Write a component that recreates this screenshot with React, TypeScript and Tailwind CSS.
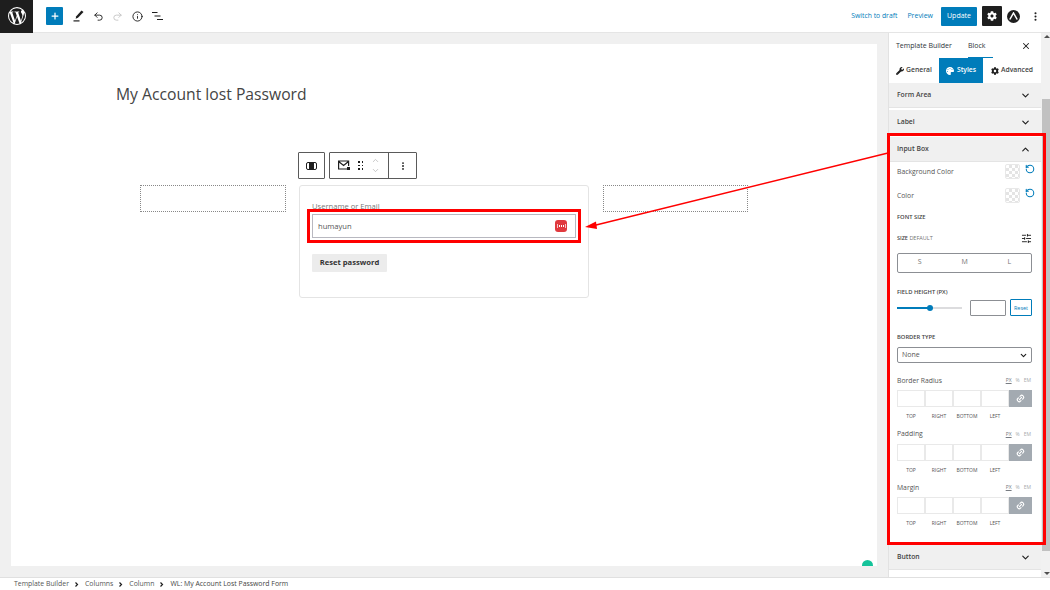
import { ChevronDown, ChevronUp, Info, Link2, MoreVertical, Plus, Redo2, RotateCw, SlidersHorizontal, Undo2, X } from "lucide-react";
import { FaCog, FaPalette, FaWrench } from "react-icons/fa";

const Checker = () => (
  <div className="w-[15px] h-[15px] rounded-[2px] border border-[#e8e8e8] bg-[repeating-conic-gradient(#e4e4e4_0_25%,#ffffff_0_50%)] bg-[length:6px_6px]" />
);

const PanelHead = ({ label, open }: { label: string; open?: boolean }) => (
  <div className="h-[25px] bg-[#f0f0f0] border-b border-[#e4e4e4] flex items-center justify-between pl-[8px] pr-[10px] shrink-0">
    <span className="text-[6.800px] font-semibold text-[#444]">{label}</span>
    {open ? <ChevronUp size={11} strokeWidth={2.5} className="text-[#1e1e1e]" /> : <ChevronDown size={11} strokeWidth={2.5} className="text-[#1e1e1e]" />}
  </div>
);

const ColorRow = ({ label }: { label: string }) => (
  <div className="h-[24px] pt-[2px] flex items-start justify-between -mr-[3px]">
    <span className="text-[6.800px] leading-[15px] text-[#555]">{label}</span>
    <div className="flex items-start gap-[5px]">
      <Checker />
      <RotateCw size={10} strokeWidth={2.5} className="text-[#007cba] -scale-x-100" />
    </div>
  </div>
);

const SpacingRow = ({ label }: { label: string }) => (
  <div className="h-[53.5px]">
    <div className="flex items-center justify-between h-[16px] pr-[1px]">
      <span className="text-[6.800px] text-[#555]">{label}</span>
      <span className="flex gap-[4px] text-[5px] text-[#a7aaad]">
        <span className="underline text-[#787c82]">PX</span>
        <span>%</span>
        <span>EM</span>
      </span>
    </div>
    <div className="flex h-[17px] mt-[1px]">
      {[0, 1, 2, 3].map((i) => (
        <div key={i} className="w-[28px] border border-[#e9e9e9]" />
      ))}
      <div className="w-[23px] bg-[#a3aab1] flex items-center justify-center">
        <Link2 size={9} strokeWidth={3} className="text-white -rotate-45" />
      </div>
    </div>
    <div className="flex mt-[6px] text-[5px] text-[#555]">
      {["TOP", "RIGHT", "BOTTOM", "LEFT"].map((t) => (
        <span key={t} className="w-[28px] text-center">{t}</span>
      ))}
    </div>
  </div>
);

const Crumb = () => (
  <svg width="16" height="7" viewBox="0 0 16 7" fill="none" stroke="#1e1e1e" strokeWidth="1.200">
    <path d="M6.500 1.500 8.500 3.500 6.500 5.500" />
  </svg>
);

export default function App() {
  return (
    <div className="relative w-[1050px] h-[590px] overflow-hidden bg-white flex flex-col font-['Open_Sans',sans-serif]">
      {/* top bar */}
      <header className="h-[33px] shrink-0 border-b border-[#e5e5e5] flex items-center">
        <div className="w-[33px] h-[33px] bg-[#1e1e1e] flex items-center justify-center">
          <svg width="18" height="18" viewBox="0 0 20 20" fill="white">
            <path d="M10 0a10 10 0 1 0 0 20 10 10 0 0 0 0-20zM1.200 10c0-1.300.3-2.500.8-3.600l4.200 11.500A8.800 8.800 0 0 1 1.200 10zm8.800 8.800c-.9 0-1.700-.1-2.500-.4l2.600-7.700 2.700 7.500v.1c-.9.300-1.800.5-2.800.5zm1.200-12.900c.5 0 1-.1 1-.1.500 0 .4-.8-.1-.7 0 0-1.400.1-2.300.1-.8 0-2.200-.1-2.200-.1-.5 0-.6.700-.1.700 0 0 .4.100.9.100l1.300 3.700-1.900 5.600-3.100-9.300c.5 0 1-.1 1-.1.500 0 .4-.8-.1-.7 0 0-1.400.1-2.300.1h-.6A8.800 8.800 0 0 1 16 3.600h-.1c-.9 0-1.500.8-1.500 1.600 0 .7.400 1.300.9 2.100.3.600.7 1.300.7 2.400 0 .7-.3 1.600-.7 2.700l-.9 3-3.200-9.500zm3.200 11.700 2.700-7.800c.5-1.300.7-2.300.7-3.200 0-.3 0-.6-.1-.9a8.800 8.800 0 0 1-3.300 11.900z" />
          </svg>
        </div>
        <div className="ml-[13px] w-[17px] h-[18px] bg-[#007cba] rounded-[1px] flex items-center justify-center">
          <Plus size={10} strokeWidth={3} className="text-white" />
        </div>
        <svg className="ml-[10px]" width="11" height="12" viewBox="0 0 11 12" fill="#1e1e1e">
          <path d="M8.500.500 10.500 2 5 7.800 2.600 8.800 3.300 6.300Z" />
          <rect x="0.500" y="10.300" width="6" height="1.200" />
        </svg>
        <Undo2 size={11} strokeWidth={2} className="ml-[9px] text-[#1e1e1e]" />
        <Redo2 size={11} strokeWidth={2} className="ml-[8px] text-[#c4c4c4]" />
        <Info size={11} strokeWidth={2} className="ml-[9px] text-[#1e1e1e]" />
        <svg className="ml-[9px]" width="11" height="10" viewBox="0 0 11 10" stroke="#1e1e1e" strokeWidth="1.200">
          <path d="M0 1.500H5.500M2.500 5H8.500M5 8.500H11" />
        </svg>
        <div className="ml-auto flex items-center">
          <span className="text-[6.800px] text-[#007cba]">Switch to draft</span>
          <span className="ml-[10px] text-[7px] text-[#007cba]">Preview</span>
          <div className="ml-[8px] w-[36px] h-[19px] bg-[#007cba] rounded-[1px] text-white text-[7px] flex items-center justify-center">Update</div>
          <div className="ml-[5px] w-[20px] h-[20px] bg-[#1e1e1e] rounded-[1px] flex items-center justify-center">
            <FaCog size={10} className="text-white" />
          </div>
          <div className="ml-[5px] w-[13px] h-[13px] bg-[#1e1e1e] rounded-full flex items-center justify-center">
            <svg width="9" height="8" viewBox="0 0 9 8" fill="none" stroke="white" strokeWidth="1.500">
              <path d="M.8 7.500 4.500 1 8.200 7.500" />
            </svg>
          </div>
          <MoreVertical size={11} strokeWidth={2.5} className="ml-[10px] mr-[9px] text-[#1e1e1e]" />
        </div>
      </header>

      <div className="flex flex-1 min-h-0">
        {/* editor */}
        <main className="w-[888px] shrink-0 bg-[#f0f0f0] px-[11px] pt-[11px] pb-[11px]">
          <div className="relative h-full bg-white overflow-hidden">
            <h1 className="pl-[105px] pt-[39px] text-[15.700px] leading-[22px] text-[#444]">My Account lost Password</h1>
            <div className="flex ml-[129px] mt-[47px]">
              <div className="w-[146px] h-[27px] mt-[33px] border border-dotted border-[#888]" />
              <div className="ml-[13px]">
                <div className="flex h-[27px] -ml-[1px]">
                  <div className="w-[27px] border border-[#5a5a5a] rounded-[1px] flex items-center justify-center">
                    <div className="w-[11px] h-[8px] border border-[#1e1e1e] rounded-[2px] flex justify-center"><div className="w-[5px] bg-[#1e1e1e]" /></div>
                  </div>
                  <div className="ml-[4px] border border-[#5a5a5a] rounded-[1px] flex">
                    <div className="w-[59px] flex items-center pl-[7px] border-r border-[#5a5a5a]">
                      <svg width="14" height="11" viewBox="0 0 14 11" fill="none" stroke="#1e1e1e" strokeWidth="1.200">
                        <path d="M10 9H1.600V1h10v5M1.600 1.500 6.600 5.500 11.500 1.500" />
                        <rect x="10" y="7" width="3" height="3" fill="#1e1e1e" stroke="none" />
                      </svg>
                      <div className="ml-[7px] grid grid-cols-2 gap-[2px]">
                        {[0, 1, 2, 3, 4, 5].map((i) => (
                          <div key={i} className="w-[1.500px] h-[1.500px] bg-[#1e1e1e]" />
                        ))}
                      </div>
                      <div className="ml-[8px] flex flex-col gap-[1px]">
                        <ChevronUp size={9} className="text-[#b5b5b5]" />
                        <ChevronDown size={9} className="text-[#b5b5b5]" />
                      </div>
                    </div>
                    <div className="w-[27px] flex items-center justify-center">
                      <MoreVertical size={10} strokeWidth={2.5} className="text-[#1e1e1e]" />
                    </div>
                  </div>
                </div>
                <div className="mt-[6px] w-[290px] h-[113px] border border-[#e4e4e4] rounded-[3px] px-[12px] pt-[15px]">
                  <div className="text-[7.600px] leading-[11px] text-[#777]">Username or Email</div>
                  <div className="h-[24px] mt-[2px] border border-[#b8b8c0] flex items-center justify-between pl-[5px] pr-[8px]">
                    <span className="text-[7.600px] text-[#555] pt-[1px]">humayun</span>
                    <div className="w-[12px] h-[12px] bg-[#e0393e] rounded-[3px] flex items-center justify-center gap-[1px]">
                      <span className="w-[1px] h-[4px] bg-white/70" />
                      {[0, 1, 2].map((i) => (
                        <span key={i} className="w-[1px] h-[1.500px] bg-white" />
                      ))}
                      <span className="w-[1px] h-[4px] bg-white/70" />
                    </div>
                  </div>
                  <div className="mt-[16px] w-[75px] h-[18px] bg-[#ececec] rounded-[1px] flex items-center justify-center text-[7.600px] font-bold text-[#333]">Reset password</div>
                </div>
              </div>
              <div className="ml-[14px] w-[145px] h-[27px] mt-[33px] border border-dotted border-[#888]" />
            </div>
            <div className="absolute right-[4px] -bottom-[5px] w-[11px] h-[11px] rounded-full bg-[#15c39a]" />
          </div>
        </main>

        {/* sidebar */}
        <aside className="flex-1 border-l border-[#e2e2e2] flex min-w-0 h-[544px]">
          <div className="w-[152px] shrink-0 flex flex-col overflow-hidden">
            <div className="h-[25px] shrink-0 flex items-center pl-[7px] pr-[10px] pt-[1px] text-[7px] text-[#2c3338]">
              <span>Template Builder</span>
              <span className="ml-[16px] h-full w-[25px] flex items-center border-y border-t-transparent border-b-[#007cba]">Block</span>
              <X size={10} strokeWidth={2.5} className="ml-auto text-[#1e1e1e]" />
            </div>
            <div className="h-[25px] shrink-0 flex items-stretch text-[6.800px] font-semibold text-[#444]">
              <div className="w-[50px] flex items-center justify-center gap-[2px]"><FaWrench size={8} className="text-[#1e1e1e]" />General</div>
              <div className="w-[44px] bg-[#007cba] text-white flex items-center justify-center gap-[3px]"><FaPalette size={8} />Styles</div>
              <div className="flex-1 flex items-center justify-center gap-[2px]"><FaCog size={8} className="text-[#1e1e1e]" />Advanced</div>
            </div>
            <PanelHead label="Form Area" />
            <div className="h-[2px] shrink-0" />
            <PanelHead label="Label" />
            <div className="h-[2px] shrink-0" />
            <PanelHead label="Input Box" open />
            <div className="h-[382px] shrink-0 pl-[8px] pr-[9px]">
              <ColorRow label="Background Color" />
              <ColorRow label="Color" />
              <div className="mt-[3px] text-[5.800px] font-semibold text-[#444]">FONT SIZE</div>
              <div className="mt-[11px] flex items-center justify-between">
                <span className="text-[5.500px] text-[#757575]"><span className="font-semibold text-[#444]">SIZE</span> DEFAULT</span>
                <SlidersHorizontal size={11} className="text-[#1e1e1e]" />
              </div>
              <div className="mt-[9px] h-[20px] border border-[#8c8f94] rounded-[2px] flex items-center justify-around text-[7px] text-[#757575]">
                <span>S</span><span>M</span><span>L</span>
              </div>
              <div className="mt-[15px] text-[5.800px] font-semibold text-[#444]">FIELD HEIGHT (PX)</div>
              <div className="mt-[3px] flex items-center">
                <div className="relative w-[65px] h-[2px] bg-[#dcdcde]">
                  <div className="h-full w-[33px] bg-[#007cba]" />
                  <div className="absolute left-[30px] -top-[2px] w-[6px] h-[6px] rounded-full bg-[#007cba]" />
                </div>
                <div className="ml-[8px] w-[36px] h-[16px] border border-[#8c8f94] rounded-[1px]" />
                <div className="ml-[4px] w-[22px] h-[17px] border border-[#007cba] rounded-[1px] text-[#007cba] text-[5.500px] flex items-center justify-center">Reset</div>
              </div>
              <div className="mt-[17px] text-[5.800px] font-semibold text-[#444]">BORDER TYPE</div>
              <div className="mt-[5px] h-[16px] border border-[#8c8f94] rounded-[2px] flex items-center justify-between pl-[4px] pr-[3px] text-[7px] text-[#555]">
                None
                <ChevronDown size={9} strokeWidth={3} className="text-[#1e1e1e]" />
              </div>
              <div className="mt-[10px]">
                <SpacingRow label="Border Radius" />
                <SpacingRow label="Padding" />
                <SpacingRow label="Margin" />
              </div>
            </div>
            <div className="h-[1px] shrink-0 bg-[#e4e4e4]" />
            <PanelHead label="Button" />
          </div>
          {/* scrollbar */}
          <div className="flex-1 bg-[#f1f1f1] relative">
            <div className="absolute top-[2px] left-[3px] w-0 h-0 border-x-[3px] border-x-transparent border-b-[3px] border-b-[#505050]" />
            <div className="absolute top-[66px] left-[1px] right-0 h-[452px] bg-[#c1c1c1]" />
            <div className="absolute bottom-[2px] left-[3px] w-0 h-0 border-x-[3px] border-x-transparent border-t-[3px] border-t-[#505050]" />
          </div>
        </aside>
      </div>

      {/* breadcrumbs */}
      <footer className="h-[13px] shrink-0 border-t border-[#e0e0e0] flex items-center pl-[14px] text-[6.900px] text-[#555] leading-none">
        <span>Template Builder</span><Crumb />
        <span>Columns</span><Crumb />
        <span>Column</span><Crumb />
        <span className="text-[#444]">WL: My Account Lost Password Form</span>
      </footer>

      {/* annotation overlay */}
      <div className="absolute left-[307px] top-[209px] w-[274px] h-[34px] border-[3px] border-[#ff0000]" />
      <div className="absolute left-[887px] top-[133px] w-[159px] h-[412px] border-[3px] border-[#ff0000]" />
      <svg className="absolute left-0 top-0 pointer-events-none" width="1050" height="590" fill="none">
        <path d="M888 153 592 226" stroke="#ff0000" strokeWidth="1.500" />
        <path d="M585 227 596 221.500 597 229Z" fill="#ff0000" />
      </svg>
    </div>
  );
}
